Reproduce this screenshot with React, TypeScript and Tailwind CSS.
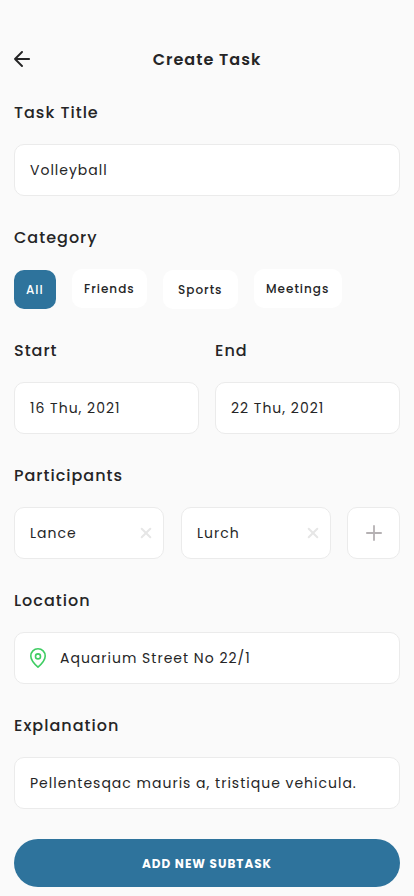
import React, { useState } from 'react';

const categories = [
    { name: 'All', style: 'mt-px w-[42px]' },
    { name: 'Friends', style: 'w-[75px]' },
    { name: 'Sports', style: 'mt-px w-[75px] pl-[15px]' },
    { name: 'Meetings', style: 'w-[88px]' },
];

const Section: React.FC<{ title: string; children: React.ReactNode }> = ({ title, children }) => (
    <section className="flex-1 min-w-0">
        <h2 className="h-6 mb-5 pt-px text-[16px] leading-6 font-medium whitespace-nowrap">{title}</h2>
        {children}
    </section>
);

const Field: React.FC<{ className?: string; children: React.ReactNode }> = ({ className = '', children }) => (
    <div className={`h-[52px] flex items-center px-[15px] bg-white border border-[#ebebeb] rounded-[10px] text-[14px] whitespace-nowrap ${className}`}>
        {children}
    </div>
);

const Participant: React.FC<{ name: string }> = ({ name }) => (
    <Field className="w-[150px] justify-between pr-[11px]">
        <span>{name}</span>
        <button aria-label={`Remove ${name}`}>
            <svg width="12" height="12" viewBox="0 0 12 12" fill="none" stroke="#e6e6e6" strokeWidth="2" strokeLinecap="round">
                <path d="M1.7 1.7l8.6 8.6M10.3 1.7l-8.6 8.6" />
            </svg>
        </button>
    </Field>
);

export default function App() {
    const [selected, setSelected] = useState('All');

    return (
        <div className="h-[896px] w-[414px] overflow-hidden bg-[#fafafa] px-[14px] pt-[47px] text-[#252526] tracking-[1px] font-['Poppins','Inter',sans-serif]">
            <header className="grid grid-cols-[16px_1fr_16px] items-center h-6 mb-[29px]">
                <button aria-label="Back">
                    <svg width="16" height="16" viewBox="0 0 16 16" fill="none" stroke="currentColor" strokeWidth="1.9" strokeLinecap="round" strokeLinejoin="round">
                        <path d="M15.2 8H1M8 1L1 8l7 7" />
                    </svg>
                </button>
                <h1 className="h-6 pt-px text-center text-[16px] leading-6 font-semibold">Create Task</h1>
            </header>

            <main className="flex flex-col gap-[29px]">
                <Section title="Task Title">
                    <Field>Volleyball</Field>
                </Section>

                <Section title="Category">
                    <div className="flex items-start gap-4 h-10">
                        {categories.map(c => (
                            <button
                                key={c.name}
                                onClick={() => setSelected(c.name)}
                                className={`h-[39px] pl-3 text-left rounded-[10px] text-[12px] font-medium whitespace-nowrap ${c.style} ${selected === c.name ? 'bg-[#2e739c] text-white' : 'bg-white'}`}
                            >
                                {c.name}
                            </button>
                        ))}
                    </div>
                </Section>

                <div className="flex gap-4">
                    <Section title="Start">
                        <Field>16 Thu, 2021</Field>
                    </Section>
                    <Section title="End">
                        <Field>22 Thu, 2021</Field>
                    </Section>
                </div>

                <Section title="Participants">
                    <div className="flex gap-[17px]">
                        <Participant name="Lance" />
                        <Participant name="Lurch" />
                        <button aria-label="Add participant" className="-ml-px w-[53px] h-[52px] flex items-center justify-center bg-white border border-[#ebebeb] rounded-[10px]">
                            <svg width="16" height="16" viewBox="0 0 16 16" fill="none" stroke="#b5b1b3" strokeWidth="1.8" strokeLinecap="round">
                                <path d="M8 .9v14.2M.9 8h14.2" />
                            </svg>
                        </button>
                    </div>
                </Section>

                <Section title="Location">
                    <Field>
                        <svg width="16" height="20" viewBox="0 0 16 20" fill="none" stroke="#3fcd63" strokeWidth="1.6" strokeLinejoin="round" className="mr-[14px]">
                            <path d="M8 .8C3.9.8.8 4 .8 8c0 4.600 3.500 7.900 7.200 11.200C11.700 15.900 15.200 12.600 15.200 8 15.200 4 12.100.8 8 .8z" />
                            <circle cx="8" cy="8.400" r="2.500" />
                        </svg>
                        <span>Aquarium Street No 22/1</span>
                    </Field>
                </Section>

                <Section title="Explanation">
                    <Field>Pellentesqac mauris a, tristique vehicula.</Field>
                </Section>
            </main>

            <button className="w-full h-12 mt-[30px] pt-0.5 rounded-full bg-[#2e739c] text-white text-[12px] font-bold">
                ADD NEW SUBTASK
            </button>
        </div>
    );
}
